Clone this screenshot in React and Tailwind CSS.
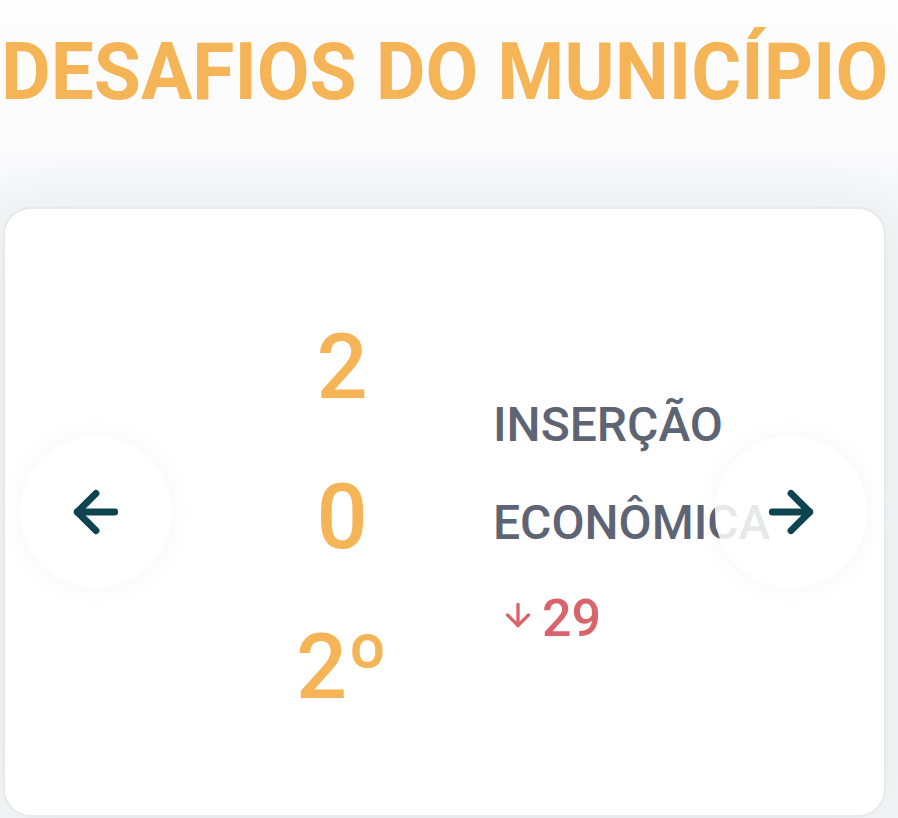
import { ArrowLeft, ArrowRight, ArrowDown } from "lucide-react";

const font = { fontFamily: "Roboto, 'Noto Sans', sans-serif" };

function NavButton({ side, children }) {
    const place = side === "left" ? "left-[15px]" : "right-[17px]";
    return (
        <button
            className={`absolute top-1/2 -translate-y-1/2 ${place} flex h-[152px] w-[152px] items-center justify-center rounded-full bg-white/85 shadow-[0_0_26px_rgba(0,0,0,0.045)] text-[#0d4450]`}
        >
            {children}
        </button>
    );
}

function ChallengeCard() {
    return (
        <div className="relative h-[610px] w-[883px] ml-[3px] rounded-[28px] border-2 border-[#e6e9ee] bg-white shadow-[0_0_60px_rgba(0,0,0,0.05)]">
            <div className="flex items-start pt-[84px] pl-[287px] font-medium">
                <div className="flex w-[100px] flex-col text-center text-[90px] leading-[150px] text-[#f5b556]">
                    <span>2</span>
                    <span>0</span>
                    <span>2º</span>
                </div>
                <div className="ml-[101px] mt-[83px] flex flex-col">
                    <span className="text-[48px] leading-[98px] text-[#5d6575]">
                        INSERÇÃO
                    </span>
                    <span className="text-[48px] leading-[98px] text-[#5d6575]">
                        ECONÔMICA
                    </span>
                    <div className="mt-[17px] flex items-start text-[#d9646c]">
                        <ArrowDown
                            size={36}
                            strokeWidth={2.2}
                            className="ml-[7px] mt-[8px]"
                        />
                        <span className="ml-[6px] text-[52px] leading-[60px]">
                            29
                        </span>
                    </div>
                </div>
            </div>
            <NavButton side="left">
                <ArrowLeft size={64} strokeWidth={2.6} />
            </NavButton>
            <NavButton side="right">
                <ArrowRight size={64} strokeWidth={2.6} />
            </NavButton>
        </div>
    );
}

export default function App() {
    return (
        <div
            style={font}
            className="h-[818px] w-full overflow-hidden bg-[linear-gradient(to_bottom,#fdfdfd,#fbfbfc_140px,#f4f5f7_220px)]"
        >
            <h1 className="pt-[32px] pl-[1px] text-[80px] font-bold leading-none text-[#f5b556] whitespace-nowrap origin-left scale-x-[0.957]">
                DESAFIOS DO MUNICÍPIO
            </h1>
            <div className="mt-[95px]">
                <ChallengeCard />
            </div>
        </div>
    );
}
